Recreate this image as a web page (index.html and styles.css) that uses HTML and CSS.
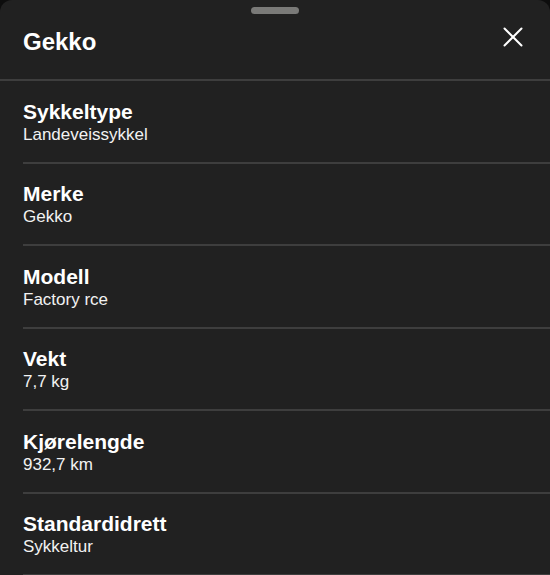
FILE: index.html
```html
<!DOCTYPE html>
<html lang="no">
<head>
  <meta charset="UTF-8" />
  <meta name="viewport" content="width=device-width, initial-scale=1.0" />
  <title>Gekko</title>
  <link rel="stylesheet" href="styles.css">
</head>
<body>

<div class="sheet">
  <div class="handle"></div>

  <header class="sheet-header">
    <h1>Gekko</h1>
    <button class="close" aria-label="Lukk">
      <svg width="20" height="20" viewBox="0 0 20 20">
        <path d="M1.5 1.5 L18.5 18.5 M18.5 1.5 L1.5 18.5" stroke="#fff" stroke-width="2" stroke-linecap="round" fill="none" />
      </svg>
    </button>
  </header>

  <ul class="details">
    <li><span class="label">Sykkeltype</span><span class="value">Landeveissykkel</span></li>
    <li><span class="label">Merke</span><span class="value">Gekko</span></li>
    <li><span class="label">Modell</span><span class="value">Factory rce</span></li>
    <li><span class="label">Vekt</span><span class="value">7,7 kg</span></li>
    <li><span class="label">Kjørelengde</span><span class="value">932,7 km</span></li>
    <li><span class="label">Standardidrett</span><span class="value">Sykkeltur</span></li>
  </ul>
</div>

</body>
</html>
```

FILE: styles.css
```css
body {
  margin: 0;
  padding: 0;
  background: #0d0d0d;
  font-family: "Liberation Sans", Arial, sans-serif;
  color: #fff;
}

.sheet {
  background: #212121;
  border-radius: 12px 12px 0 0;
  min-height: 575px;
  overflow: hidden;
}

.handle {
  width: 48px;
  height: 7px;
  margin: 7px auto 0;
  background: #7a7a78;
  border-radius: 4px;
}

.sheet-header {
  display: flex;
  align-items: flex-start;
  justify-content: space-between;
  height: 65px;
  margin-top: 2px;
  padding: 12px 27px 0 23px;
  border-bottom: 2px solid #3e3e3e;
  box-sizing: border-box;
}

.sheet-header h1 {
  margin: 0;
  font-size: 24px;
  line-height: 28px;
  font-weight: bold;
}

.close {
  background: none;
  border: 0;
  padding: 0;
  margin-top: -1px;
  display: flex;
}

.details {
  list-style: none;
  margin: 0;
  padding: 0;
}

.details li {
  margin-left: 23px;
  padding: 18.5px 0 16px;
  border-bottom: 2px solid #3e3e3e;
  display: flex;
  flex-direction: column;
}

.label {
  font-size: 21px;
  font-weight: bold;
  line-height: 24px;
}

.value {
  font-size: 17px;
  line-height: 22px;
  padding-top: 0;
  color: #f2f2f2;
}
```
